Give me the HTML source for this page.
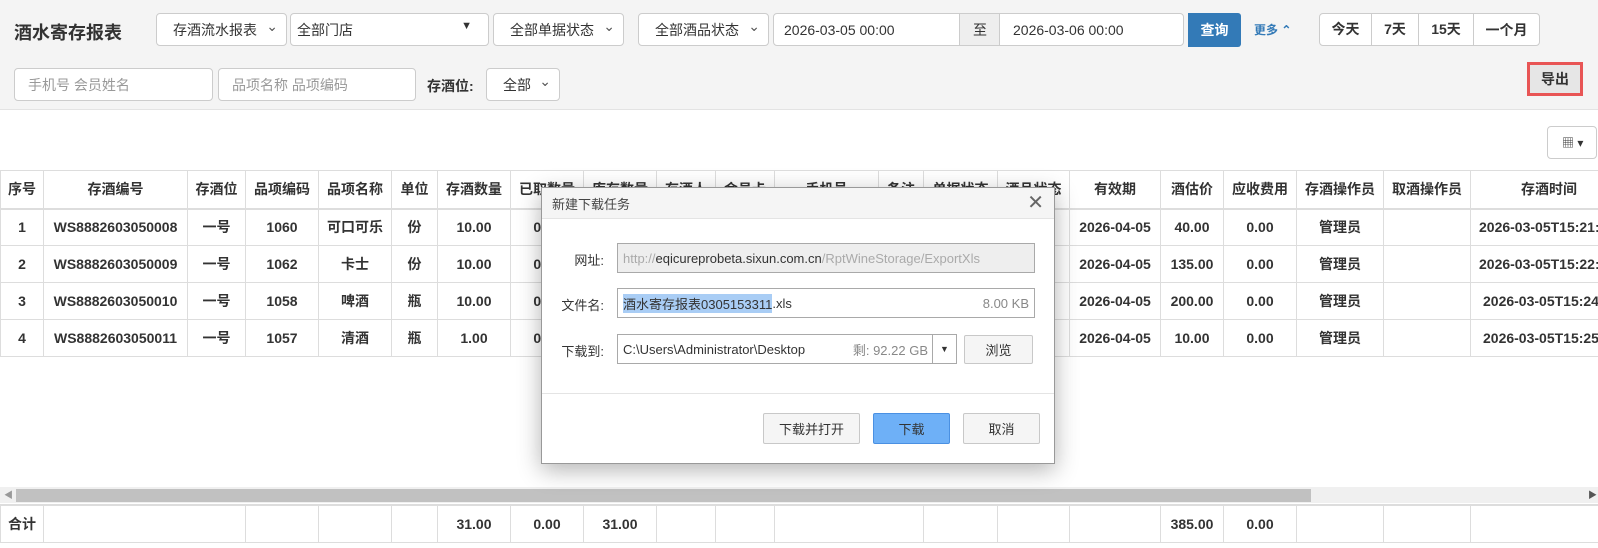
<!DOCTYPE html>
<html><head><meta charset="utf-8"><style>
*{box-sizing:border-box;margin:0;padding:0}
body{width:1598px;height:548px;overflow:hidden;background:#fff;font-family:"Liberation Sans","Noto Sans CJK SC",sans-serif;color:#333;position:relative;font-size:14px}
.a{position:absolute}
.panel{left:0;top:0;width:1598px;height:110px;background:#f4f4f4;border-bottom:1px solid #e3e3e3}
.box{position:absolute;background:#fff;border:1px solid #ccc;border-radius:4px;font-size:14px;color:#333;display:flex;align-items:center;padding-left:10px}
.sel::after{content:"⌄";position:absolute;right:8px;top:4px;font-size:14px;color:#555}
.ph{color:#999}
table{border-collapse:collapse;table-layout:fixed;position:absolute;left:0;font-size:14px;font-weight:bold;color:#333}
td,th{border:1px solid #ddd;text-align:center;white-space:nowrap;overflow:hidden;padding:0}
th{height:38px;border-bottom:2px solid #ddd}
td{height:37px}
.dlg{left:541px;top:187px;width:514px;height:277px;background:#fff;border:1px solid #999;box-shadow:0 6px 22px rgba(0,0,0,.3);font-family:"Liberation Sans","Noto Sans CJK SC",sans-serif;font-size:13px;color:#333;font-weight:normal}
.dt{position:absolute;left:0;top:0;width:100%;height:31px;background:#f5f5f5;border-bottom:1px solid #e4e4e4;padding:6px 10px;color:#444}
.lb{position:absolute;width:62px;text-align:right;left:0}
.in{position:absolute;left:75px;border:1px solid #a9a9a9;height:30px;display:flex;align-items:center;padding-left:5px}
.bt{position:absolute;top:225px;height:31px;border:1px solid #c8c8c8;background:#f5f5f5;border-radius:2px;display:flex;align-items:center;justify-content:center}
</style></head><body>
<div class="a panel"></div>
<div class="a" style="left:14px;top:19px;font-size:18px;font-weight:bold;color:#333">酒水寄存报表</div>
<div class="box sel" style="left:156px;top:13px;width:131px;height:33px;padding-left:16px">存酒流水报表</div>
<div class="box" style="left:290px;top:13px;width:199px;height:33px;padding-left:6px">全部门店<span style="position:absolute;right:16px;top:6px;font-size:11px">▼</span></div>
<div class="box sel" style="left:493px;top:13px;width:131px;height:33px;padding-left:16px">全部单据状态</div>
<div class="box sel" style="left:638px;top:13px;width:131px;height:33px;padding-left:16px">全部酒品状态</div>
<div class="box" style="left:773px;top:13px;width:187px;height:33px;border-radius:4px 0 0 4px">2026-03-05 00:00</div>
<div class="box" style="left:959px;top:13px;width:41px;height:33px;background:#eee;border-radius:0;padding-left:13px">至</div>
<div class="box" style="left:999px;top:13px;width:185px;height:33px;border-radius:0 4px 4px 0;padding-left:13px">2026-03-06 00:00</div>
<div class="a" style="left:1188px;top:13px;width:53px;height:34px;background:#337ab7;border-radius:0 3px 3px 0;color:#fff;font-weight:bold;display:flex;align-items:center;justify-content:center">查询</div>
<div class="a" style="left:1254px;top:21px;font-size:12px;color:#337ab7;font-weight:bold">更多 ⌃</div>
<div class="box" style="left:1319px;top:13px;width:221px;height:33px;padding:0;font-weight:bold">
<span style="width:52px;text-align:center;border-right:1px solid #ccc;line-height:31px">今天</span><span style="width:47px;text-align:center;border-right:1px solid #ccc;line-height:31px">7天</span><span style="width:55px;text-align:center;border-right:1px solid #ccc;line-height:31px">15天</span><span style="flex:1;text-align:center">一个月</span></div>
<div class="box ph" style="left:14px;top:68px;width:199px;height:33px;padding-left:13px">手机号 会员姓名</div>
<div class="box ph" style="left:218px;top:68px;width:198px;height:33px;padding-left:13px">品项名称 品项编码</div>
<div class="a" style="left:427px;top:76px;font-weight:bold">存酒位:</div>
<div class="box sel" style="left:486px;top:68px;width:74px;height:33px;padding-left:16px">全部</div>
<div class="a" style="left:1527px;top:62px;width:56px;height:34px;border:3px solid #e85555;background:#e6e6e6;display:flex;align-items:center;justify-content:center;font-weight:bold">导出</div>
<div class="box" style="left:1547px;top:126px;width:50px;height:33px;padding-left:14px;font-size:12px">▦ ▾</div>

<table style="top:170px;width:1640px">
<colgroup><col style="width:43px"><col style="width:144px"><col style="width:58px"><col style="width:73px"><col style="width:73px"><col style="width:46px"><col style="width:73px"><col style="width:73px"><col style="width:73px"><col style="width:59px"><col style="width:59px"><col style="width:104px"><col style="width:45px"><col style="width:74px"><col style="width:72px"><col style="width:91px"><col style="width:63px"><col style="width:73px"><col style="width:87px"><col style="width:87px"><col style="width:170px"></colgroup>
<tr><th>序号</th><th>存酒编号</th><th>存酒位</th><th>品项编码</th><th>品项名称</th><th>单位</th><th>存酒数量</th><th>已取数量</th><th>库存数量</th><th>存酒人</th><th>会员卡</th><th>手机号</th><th>备注</th><th>单据状态</th><th>酒品状态</th><th>有效期</th><th>酒估价</th><th>应收费用</th><th>存酒操作员</th><th>取酒操作员</th><th style="text-align:left;padding-left:8px">　　　存酒时间</th></tr>
<tr><td>1</td><td>WS8882603050008</td><td>一号</td><td>1060</td><td>可口可乐</td><td>份</td><td>10.00</td><td>0.00</td><td>10.00</td><td></td><td></td><td></td><td></td><td></td><td></td><td>2026-04-05</td><td>40.00</td><td>0.00</td><td>管理员</td><td></td><td style="text-align:left;padding-left:8px">2026-03-05T15:21:30</td></tr>
<tr><td>2</td><td>WS8882603050009</td><td>一号</td><td>1062</td><td>卡士</td><td>份</td><td>10.00</td><td>0.00</td><td>10.00</td><td></td><td></td><td></td><td></td><td></td><td></td><td>2026-04-05</td><td>135.00</td><td>0.00</td><td>管理员</td><td></td><td style="text-align:left;padding-left:8px">2026-03-05T15:22:10</td></tr>
<tr><td>3</td><td>WS8882603050010</td><td>一号</td><td>1058</td><td>啤酒</td><td>瓶</td><td>10.00</td><td>0.00</td><td>10.00</td><td></td><td></td><td></td><td></td><td></td><td></td><td>2026-04-05</td><td>200.00</td><td>0.00</td><td>管理员</td><td></td><td style="text-align:left;padding-left:12px">2026-03-05T15:24:10</td></tr>
<tr><td>4</td><td>WS8882603050011</td><td>一号</td><td>1057</td><td>清酒</td><td>瓶</td><td>1.00</td><td>0.00</td><td>1.00</td><td></td><td></td><td></td><td></td><td></td><td></td><td>2026-04-05</td><td>10.00</td><td>0.00</td><td>管理员</td><td></td><td style="text-align:left;padding-left:12px">2026-03-05T15:25:10</td></tr>
</table>

<div class="a" style="left:0;top:487px;width:1598px;height:16px;background:#f0f0f0"></div>
<div class="a" style="left:16px;top:489px;width:1295px;height:13px;background:#c1c1c1"></div>
<div class="a" style="left:4px;top:488px;font-size:9px;color:#999">◀</div>
<div class="a" style="left:1588px;top:488px;font-size:9px;color:#555">▶</div>

<table style="top:504px;width:1640px;border-top:2px solid #ddd">
<colgroup><col style="width:43px"><col style="width:202px"><col style="width:73px"><col style="width:73px"><col style="width:46px"><col style="width:73px"><col style="width:73px"><col style="width:73px"><col style="width:59px"><col style="width:59px"><col style="width:149px"><col style="width:74px"><col style="width:72px"><col style="width:91px"><col style="width:63px"><col style="width:73px"><col style="width:87px"><col style="width:87px"><col style="width:170px"></colgroup>
<tr><td style="text-align:left;padding-left:7px">合计</td><td></td><td></td><td></td><td></td><td>31.00</td><td>0.00</td><td>31.00</td><td></td><td></td><td></td><td></td><td></td><td></td><td>385.00</td><td>0.00</td><td></td><td></td><td></td></tr>
</table>

<div class="a dlg">
<div class="dt">新建下载任务<span style="position:absolute;right:10px;top:2px;font-size:20px;color:#666;font-weight:300">✕</span></div>
<div class="lb" style="top:62px">网址:</div>
<div class="in" style="top:55px;width:418px;background:#eee;color:#aaa">http://<span style="color:#333">eqicureprobeta.sixun.com.cn</span>/RptWineStorage/ExportXls</div>
<div class="lb" style="top:107px">文件名:</div>
<div class="in" style="top:100px;width:418px"><span style="background:#a9cdf5">酒水寄存报表0305153311</span>.xls<span style="position:absolute;right:5px;color:#888">8.00 KB</span></div>
<div class="lb" style="top:153px">下载到:</div>
<div class="in" style="top:146px;width:340px">C:\Users\Administrator\Desktop<span style="position:absolute;right:28px;color:#888">剩: 92.22 GB</span><span style="position:absolute;right:0;top:0;width:24px;height:28px;border-left:1px solid #a9a9a9;text-align:center;font-size:9px;line-height:28px">▼</span></div>
<div class="bt" style="left:422px;top:147px;width:69px;height:29px">浏览</div>
<div class="a" style="left:0;top:205px;width:100%;border-top:1px solid #e4e4e4"></div>
<div class="bt" style="left:221px;width:97px">下载并打开</div>
<div class="bt" style="left:331px;width:77px;background:#6eb0f7;border-color:#4a90e2">下载</div>
<div class="bt" style="left:421px;width:77px">取消</div>
</div>
</body></html>
